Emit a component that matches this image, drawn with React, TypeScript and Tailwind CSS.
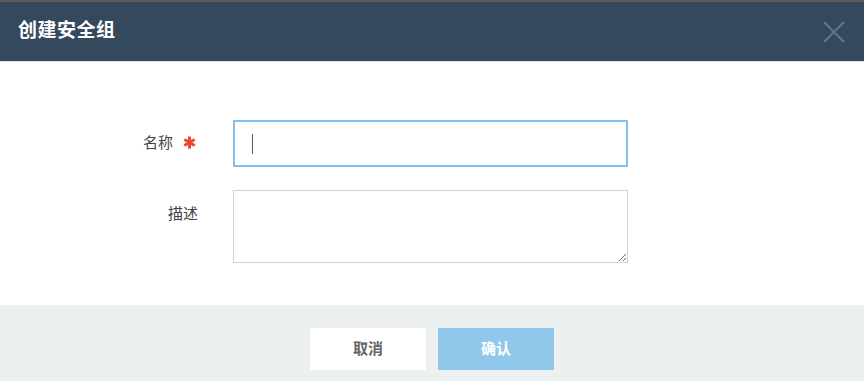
import React from 'react';

const font = { fontFamily: '"Liberation Sans", "Noto Sans CJK SC", sans-serif' };

export default function App() {
    return (
        <div className="w-[864px] h-[381px] flex flex-col bg-white overflow-hidden" style={font}>
            {/* header */}
            <div className="h-[2px] bg-[#5b5d60]" />
            <div className="h-[59px] bg-[#34495e] flex items-center justify-between pl-[18px] pr-[18px]">
                <h2 className="text-white text-[19px] font-bold tracking-[0.5px]">创建安全组</h2>
                <svg width="24" height="24" viewBox="0 0 24 24" className="text-[#637689]">
                    <path d="M2 2 L22 22 M22 2 L2 22" stroke="currentColor" strokeWidth="2" />
                </svg>
            </div>
            <div className="h-[1px] bg-[#dde3e8]" />

            {/* body */}
            <div className="flex-1 pt-[58px] flex flex-col gap-[23px]">
                <div className="flex items-center">
                    <label className="w-[198px] pr-[2px] flex justify-end items-center text-[15px] text-[#444]">
                        名称
                        <svg width="13" height="13" viewBox="0 0 13 13" className="ml-[10px] mb-[3px] text-[#e8482f]">
                            <g stroke="currentColor" strokeWidth="3" strokeLinecap="butt">
                                <path d="M6.5 0.5 V12.5" />
                                <path d="M1.3 3.5 L11.7 9.5" />
                                <path d="M1.3 9.5 L11.7 3.5" />
                            </g>
                        </svg>
                    </label>
                    <div className="ml-[35px] w-[395px] h-[47px] border-2 border-[#84c0ef] flex items-center pl-[17px]">
                        <span className="w-[1px] h-[20px] bg-[#555]" />
                    </div>
                </div>
                <div className="flex items-start">
                    <label className="w-[198px] flex justify-end text-[15px] text-[#444] pt-[13px]">描述</label>
                    <textarea className="ml-[35px] w-[395px] h-[73px] border border-[#d2d2d2] outline-none" />
                </div>
            </div>

            {/* footer */}
            <div className="h-[76px] bg-[#ecf0f1] flex justify-center items-start pt-[23px] gap-[12px]">
                <button className="w-[116px] h-[42px] bg-white text-[#666] text-[15px] font-bold">取消</button>
                <button className="w-[116px] h-[42px] bg-[#8fc8ea] text-white text-[15px] font-bold">确认</button>
            </div>
        </div>
    );
}
